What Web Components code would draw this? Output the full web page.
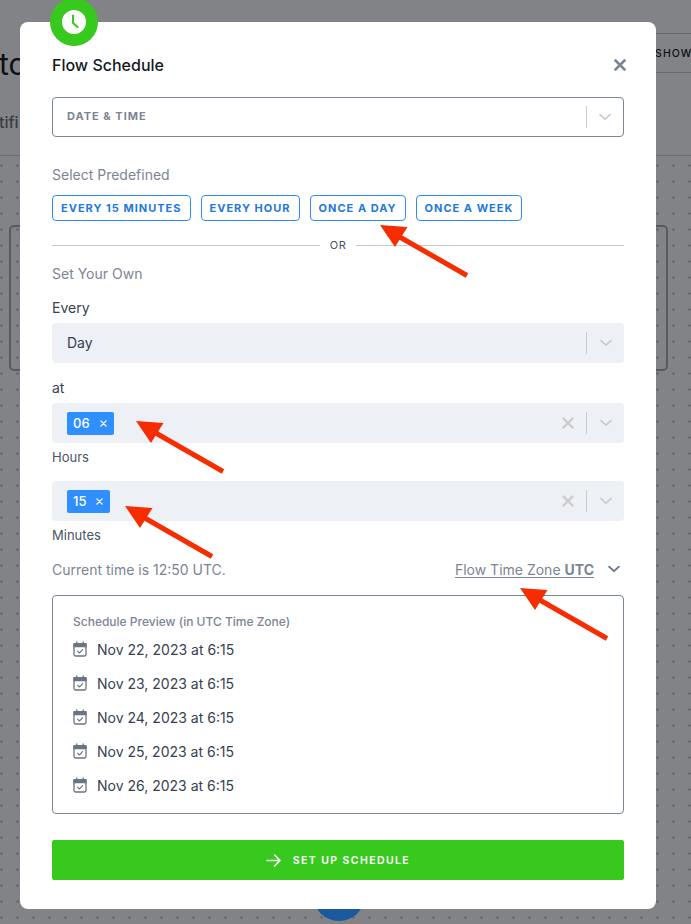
<!DOCTYPE html>
<html lang="en">
<head>
<meta charset="utf-8">
<title>Flow Schedule</title>
<style>
  html, body { margin: 0; height: 924px; overflow: hidden; background: #fff; }
  body { font-family: Inter, "Liberation Sans", sans-serif; position: relative; }
</style>
</head>
<body>
<back-page></back-page>
<schedule-modal></schedule-modal>
<script>
const chevron = (color, w = 14) => /* html */`
  <svg width="${w}" height="${w}" viewBox="0 0 14 14" fill="none" stroke="${color}" stroke-width="1.8" stroke-linecap="round" stroke-linejoin="round"><path d="M2 4.6 7 9.2 12 4.6"/></svg>`;
const cross = (color, s = 12, w = 2.2) => /* html */`
  <svg width="${s}" height="${s}" viewBox="0 0 12 12" fill="none" stroke="${color}" stroke-width="${w}" stroke-linecap="round"><path d="M1.5 1.5 10.5 10.5M10.5 1.5 1.5 10.5"/></svg>`;

class BackPage extends HTMLElement {
  constructor() {
    super();
    this.attachShadow({ mode: "open" });
  }

  static get styles() {
    return /* css */`
      :host {
        display: block;
        height: 924px;
        overflow: hidden;
        position: relative;
        z-index: 0;
        color: #16181d;
      }
      .head {
        height: 155px;
        border-bottom: 1px solid #d0d3da;
        display: flex;
        justify-content: space-between;
        overflow: hidden;
      }
      .title { margin: 42px 0 0 -1px; font-size: 30px; line-height: 44px; }
      .sub { margin: 26px 0 0 -1px; font-size: 16px; line-height: 20px; color: #6b7280; font-weight: 500; }
      .show {
        box-sizing: border-box;
        margin-top: 33px;
        height: 40px;
        width: 120px;
        margin-right: -30px;
        padding-left: 53px;
        display: flex;
        align-items: center;
        border: 1px solid #c8cbd2;
        font-size: 10.5px;
        font-weight: 500;
        letter-spacing: 1.1px;
      }
      .canvas {
        height: 768px;
        padding: 69px 23px 0 9px;
        background-image: radial-gradient(circle at 1.5px 1.5px, #c8cad0 1.1px, transparent 1.5px);
        background-size: 16px 16px;
        background-position: 0 8px;
        display: flex;
        flex-direction: column;
        align-items: center;
      }
      .box {
        box-sizing: border-box;
        width: 100%;
        height: 146px;
        border: 2px solid #a9adb6;
        border-radius: 5px;
        flex: none;
      }
      .node {
        position: relative;
        z-index: 1;
        width: 52px;
        height: 52px;
        border-radius: 50%;
        background: #1a5a9c;
        margin-top: 498px;
        flex: none;
      }
      .dim { position: absolute; inset: 0; background: rgba(5, 7, 13, .5); }
    `;
  }

  connectedCallback() {
    this.shadowRoot.innerHTML = /* html */`
      <style>${BackPage.styles}</style>
      <div class="head">
        <div>
          <div class="title">to</div>
          <div class="sub">tifi</div>
        </div>
        <div class="show">SHOW</div>
      </div>
      <div class="canvas">
        <div class="box"></div>
        <div class="node"></div>
      </div>
      <div class="dim"></div>`;
  }
}

class PickSelect extends HTMLElement {
  constructor() {
    super();
    this.attachShadow({ mode: "open" });
  }

  static get styles() {
    return /* css */`
      :host {
        display: flex;
        box-sizing: border-box;
        height: 40px;
        align-items: center;
        padding-left: 15px;
        border-radius: 4px;
        background: #edf0f5;
        color: #374151;
        font-size: 14px;
      }
      :host([outlined]) {
        background: #fff;
        border: 1px solid #7c8594;
        padding-left: 14px;
        color: #7c8594;
        font-size: 11px;
        font-weight: 700;
        letter-spacing: 1px;
      }
      :host([outlined]) .arrow { width: 36px; }
      .value { flex: 1; display: flex; align-items: center; gap: 6px; margin-top: -2px; }
      .clear { display: flex; margin-right: 12px; }
      .sep { width: 1px; height: 22px; background: #ccc; flex: none; }
      .arrow { width: 37px; display: flex; justify-content: center; flex: none; }
    `;
  }

  connectedCallback() {
    const clear = this.hasAttribute("clearable")
      ? `<span class="clear">${cross("#ccc", 12, 2.4)}</span>` : "";
    this.shadowRoot.innerHTML = /* html */`
      <style>${PickSelect.styles}</style>
      <div class="value"><slot></slot></div>
      ${clear}
      <span class="sep"></span>
      <span class="arrow">${chevron("#ccc")}</span>`;
  }
}

class PickTag extends HTMLElement {
  constructor() {
    super();
    this.attachShadow({ mode: "open" });
  }

  connectedCallback() {
    this.shadowRoot.innerHTML = /* html */`
      <style>
        :host {
          display: inline-flex;
          align-items: center;
          box-sizing: border-box;
          height: 23px;
          margin-top: 2px;
          padding: 0 7px 0 6px;
          gap: 10px;
          border-radius: 2px;
          background: #2f8fff;
          color: #fff;
          font-size: 13px;
          font-weight: 500;
        }
        svg { display: block; }
      </style>
      <slot></slot>${cross("#fff", 7, 2.2)}`;
  }
}

class PresetButton extends HTMLElement {
  constructor() {
    super();
    this.attachShadow({ mode: "open" });
  }

  connectedCallback() {
    this.shadowRoot.innerHTML = /* html */`
      <style>
        :host {
          display: inline-flex;
          align-items: center;
          box-sizing: border-box;
          height: 26px;
          padding: 0 8px;
          border: 1px solid #2e8bff;
          border-radius: 4px;
          color: #1f78e0;
          font-size: 11px;
          font-weight: 700;
          letter-spacing: 1px;
          white-space: nowrap;
        }
      </style>
      <slot></slot>`;
  }
}

class PreviewRow extends HTMLElement {
  constructor() {
    super();
    this.attachShadow({ mode: "open" });
  }

  connectedCallback() {
    this.shadowRoot.innerHTML = /* html */`
      <style>
        :host {
          display: flex;
          align-items: center;
          gap: 10px;
          height: 34px;
          color: #374151;
          font-size: 14px;
        }
        svg { flex: none; display: block; }
      </style>
      <svg width="14" height="16" viewBox="0 0 14 16" fill="none" stroke="#6b7484" stroke-width="1.3" stroke-linecap="round" stroke-linejoin="round">
        <rect x="1" y="2.6" width="12" height="12.4" rx="1.4"/>
        <path d="M1 2.6h12v3H1z" fill="#6b7484"/>
        <path d="M3.8 .8v2M10.2 .8v2"/>
        <path d="M4.6 10.2 6.4 12 9.6 8.6" stroke-width="1.1"/>
      </svg>
      <slot></slot>`;
  }
}

class MarkArrow extends HTMLElement {
  constructor() {
    super();
    this.attachShadow({ mode: "open" });
  }

  connectedCallback() {
    // x and y are the tip of the arrow, it always points up and to the left
    const x = this.getAttribute("x");
    const y = this.getAttribute("y");
    this.shadowRoot.innerHTML = /* html */`
      <style>
        :host { position: absolute; left: ${x}px; top: ${y}px; width: 90px; height: 54px; pointer-events: none; }
        svg { display: block; }
      </style>
      <svg width="90" height="54" viewBox="0 0 90 54">
        <path d="M0 0 27.5 2 15 22Z" fill="#f62d00"/>
        <path d="M18 11 87 50.5" stroke="#f62d00" stroke-width="5" fill="none"/>
      </svg>`;
  }
}

class ScheduleModal extends HTMLElement {
  constructor() {
    super();
    this.attachShadow({ mode: "open" });
  }

  static get styles() {
    return /* css */`
      :host {
        position: absolute;
        left: 20px;
        top: 22px;
        width: 636px;
        height: 887px;
        box-sizing: border-box;
        padding: 0 32px;
        background: #fff;
        border-radius: 8px;
        display: block;
        color: #7c8594;
        font-size: 14px;
      }
      .badge {
        position: absolute;
        left: 30px;
        top: -24px;
        width: 48px;
        height: 48px;
        border-radius: 50%;
        background: #38c91f;
        display: grid;
        place-items: center;
      }
      .head {
        display: flex;
        justify-content: space-between;
        align-items: center;
        height: 20px;
        padding-top: 33px;
        color: #16181d;
        font-size: 16px;
        font-weight: 500;
      }
      .close { display: flex; margin-right: -2px; }
      pick-select[outlined] { margin-top: 22px; }
      .label { line-height: 18px; white-space: nowrap; }
      .predef { margin-top: 29px; }
      .presets { display: flex; gap: 10px; margin-top: 11px; }
      .or {
        display: flex;
        align-items: center;
        gap: 10px;
        margin-top: 15px;
        height: 18px;
        font-size: 11px;
        color: #4b5563;
        letter-spacing: .5px;
      }
      .or::before, .or::after { content: ""; flex: 1; height: 1px; background: #c6cad3; }
      .own { margin-top: 11px; }
      .field { color: #374151; font-size: 14px; line-height: 18px; }
      .every { margin-top: 16px; margin-bottom: 6px; }
      .at { margin-top: 16px; margin-bottom: 6px; }
      .hint { color: #4b5563; font-size: 13px; line-height: 18px; margin-top: 5px; margin-bottom: 15px; }
      .hint.last { margin-bottom: 0; }
      .time {
        display: flex;
        justify-content: space-between;
        align-items: center;
        margin-top: 16px;
        height: 18px;
      }
      .zone { display: flex; align-items: center; gap: 13px; }
      .zone u { text-underline-offset: 2px; white-space: nowrap; }
      .zone svg { display: block; margin-right: 3px; }
      .preview {
        box-sizing: border-box;
        height: 219px;
        margin-top: 17px;
        padding: 17px 20px 0;
        border: 1px solid #7c8594;
        border-radius: 4px;
      }
      .preview-title { font-size: 12px; font-weight: 500; line-height: 18px; margin-bottom: 1px; }
      .go {
        display: flex;
        justify-content: center;
        align-items: center;
        gap: 12px;
        height: 40px;
        margin-top: 26px;
        border-radius: 2px;
        background: #38c91f;
        color: #fff;
        font-size: 10.5px;
        font-weight: 600;
        letter-spacing: 1.4px;
      }
    `;
  }

  connectedCallback() {
    const rows = [22, 23, 24, 25, 26]
      .map((d) => `<preview-row>Nov ${d}, 2023 at 6:15</preview-row>`).join("");
    this.shadowRoot.innerHTML = /* html */`
      <style>${ScheduleModal.styles}</style>
      <div class="badge">
        <svg width="24" height="24" viewBox="0 0 24 24">
          <circle cx="12" cy="12" r="12" fill="#fff"/>
          <path d="M11 5.5V13L15.5 17" fill="none" stroke="#38c91f" stroke-width="2" stroke-linecap="round" stroke-linejoin="round"/>
        </svg>
      </div>
      <div class="head">
        <span>Flow Schedule</span>
        <span class="close">${cross("#7c8594", 12, 2.6)}</span>
      </div>
      <pick-select outlined>DATE &amp; TIME</pick-select>
      <div class="label predef">Select Predefined</div>
      <div class="presets">
        <preset-button>EVERY 15 MINUTES</preset-button>
        <preset-button>EVERY HOUR</preset-button>
        <preset-button>ONCE A DAY</preset-button>
        <preset-button>ONCE A WEEK</preset-button>
      </div>
      <div class="or">OR</div>
      <div class="label own">Set Your Own</div>
      <div class="field every">Every</div>
      <pick-select>Day</pick-select>
      <div class="field at">at</div>
      <pick-select clearable><pick-tag>06</pick-tag></pick-select>
      <div class="hint">Hours</div>
      <pick-select clearable><pick-tag>15</pick-tag></pick-select>
      <div class="hint last">Minutes</div>
      <div class="time">
        <span>Current time is 12:50 UTC.</span>
        <span class="zone">
          <u>Flow Time Zone <b>UTC</b></u>
          ${chevron("#6b7484", 14)}
        </span>
      </div>
      <div class="preview">
        <div class="preview-title">Schedule Preview (in UTC Time Zone)</div>
        ${rows}
      </div>
      <div class="go">
        <svg width="15" height="13" viewBox="0 0 15 13" fill="none" stroke="#fff" stroke-width="1.5" stroke-linecap="round" stroke-linejoin="round"><path d="M1 6.5H14M8.6 1 14 6.5 8.6 12"/></svg>
        <span>SET UP SCHEDULE</span>
      </div>
      <mark-arrow x="360" y="203"></mark-arrow>
      <mark-arrow x="116" y="399"></mark-arrow>
      <mark-arrow x="105" y="484"></mark-arrow>
      <mark-arrow x="500" y="566"></mark-arrow>`;
  }
}

customElements.define("back-page", BackPage);
customElements.define("pick-select", PickSelect);
customElements.define("pick-tag", PickTag);
customElements.define("preset-button", PresetButton);
customElements.define("preview-row", PreviewRow);
customElements.define("mark-arrow", MarkArrow);
customElements.define("schedule-modal", ScheduleModal);
</script>
</body>
</html>
